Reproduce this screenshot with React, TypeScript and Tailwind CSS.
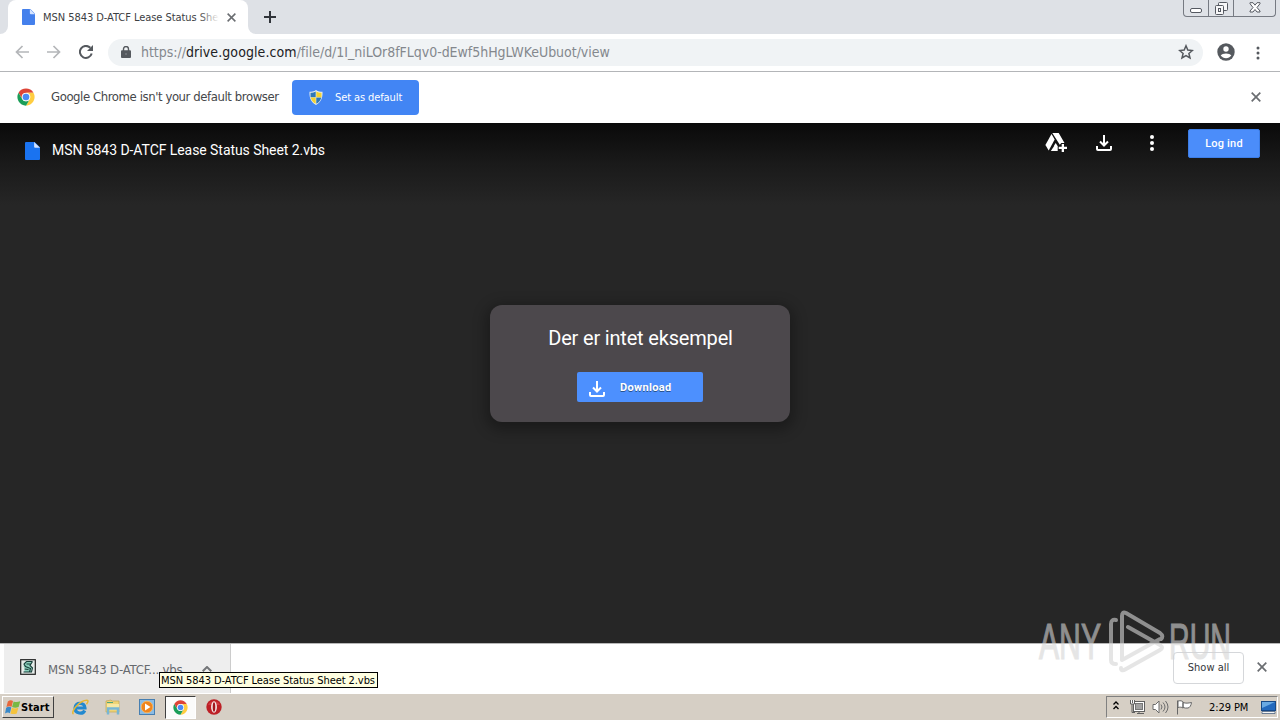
import type { ReactNode } from "react";

const ui = "font-['DejaVu_Sans_Condensed','DejaVu_Sans',sans-serif] [font-stretch:condensed] whitespace-pre leading-none";

function FileIcon({ className, fill }: { className: string; fill: string }) {
  return (
    <svg className={className} viewBox="0 0 14 17" preserveAspectRatio="none">
      <path fill={fill} d="M1 0h8l5 5v11a1 1 0 0 1-1 1H1a1 1 0 0 1-1-1V1a1 1 0 0 1 1-1z" />
      <path fill="#d5e4ff" d="M8.500 0L14 5.500H9.500a1 1 0 0 1-1-1z" />
    </svg>
  );
}

function ChromeLogo({ className }: { className: string }) {
  return (
    <svg className={className} viewBox="0 0 48 48">
      <circle cx="24" cy="24" r="23" fill="#fff" />
      <path fill="#de4437" d="M4.100 12.500A23 23 0 0 1 43.900 12.500H24A11.500 11.500 0 0 0 14 29.700z" />
      <path fill="#ffcd40" d="M43.900 12.500A23 23 0 0 1 24 47l10-17.300A11.500 11.500 0 0 0 24 12.500z" />
      <path fill="#1b9e58" d="M4.100 12.500A23 23 0 0 0 24 47l10-17.300a11.500 11.500 0 0 1-20 0z" />
      <circle cx="24" cy="24" r="11" fill="#f5f7fa" />
      <circle cx="24" cy="24" r="8.800" fill="#4a8af4" />
    </svg>
  );
}

function Cross({ className }: { className: string }) {
  return (
    <svg className={className} viewBox="0 0 10 10" fill="none" stroke="#6a6d71" strokeWidth="1.700">
      <path d="M.7.7l8.600 8.600M9.300.7L.7 9.300" />
    </svg>
  );
}

function DownloadGlyph({ className }: { className: string }) {
  return (
    <svg className={className} viewBox="0 0 16 16" fill="none" stroke="#fff" strokeWidth="2">
      <path d="M8 0v10M4 6.500l4 4 4-4M1 11v3a1 1 0 0 0 1 1h12a1 1 0 0 0 1-1v-3" />
    </svg>
  );
}

function TabStrip() {
  return (
    <div className="flex h-[34px] bg-[#dee1e6]">
      <div className="w-2 bg-white">
        <div className="h-full w-2 rounded-br-lg bg-[#dee1e6]" />
      </div>
      <div className="flex w-60 items-center rounded-t-lg bg-white pl-[14px]">
        <FileIcon className="h-4 w-[13px] shrink-0" fill="#4480ec" />
        <div className="relative ml-2 w-[176px] overflow-hidden">
          <span className={`${ui} block text-[11px] tracking-[-0.05px] text-[#3c4043]`}>MSN 5843 D-ATCF Lease Status Sheet 2.vbs</span>
          <div className="absolute inset-y-0 right-0 w-5 bg-linear-to-r from-transparent to-white" />
        </div>
        <Cross className="ml-[8px] size-[9px]" />
      </div>
      <div className="w-2 bg-white">
        <div className="h-full w-2 rounded-bl-lg bg-[#dee1e6]" />
      </div>
      <svg className="mt-[11px] ml-2 size-3" viewBox="0 0 12 12" stroke="#30343a" strokeWidth="2">
        <path d="M6 0v12M0 6h12" />
      </svg>
      <div className="mr-[4px] ml-auto flex h-[17px] w-[93px] rounded-b-[4px] border border-t-0 border-[#767a82] bg-[#dfe2e7]">
        <div className="flex w-[25px] justify-center border-r border-[#767a82] pt-[8px]">
          <div className="h-[5px] w-3 rounded-[2px] border border-[#555961] bg-white" />
        </div>
        <div className="flex w-[25px] justify-center border-r border-[#767a82] pt-[1px]">
          <svg className="size-[14px]" viewBox="0 0 14 14" fill="#f7f7f8" stroke="#555961">
            <rect x="4.500" y="1.500" width="9" height="8" rx="1" />
            <rect x="1.500" y="4.500" width="8" height="9" rx="1" />
            <rect x="4.500" y="7.500" width="2" height="3" />
          </svg>
        </div>
        <div className="flex flex-1 justify-center pt-[2px]">
          <svg className="h-[11px] w-3" viewBox="0 0 12 11" fill="#fff" stroke="#555961">
            <path d="M1 .7h3l2 2.500L8 .7h3v1L8 5.500l3 3.500v1H8L6 7.500 4 10H1V9l3-3.500-3-3.800z" />
          </svg>
        </div>
      </div>
    </div>
  );
}

function Toolbar() {
  return (
    <div className="flex h-[38px] items-center border-b border-[#b3b5b8] bg-white pb-px pl-[15px]">
      <svg className="h-3.5 w-[14px]" viewBox="0 0 14 14" fill="none" stroke="#b4b6b9" strokeWidth="1.700">
        <path d="M14 7H1.500M7.500 1l-6 6 6 6" />
      </svg>
      <svg className="ml-[18px] h-3.5 w-[14px]" viewBox="0 0 14 14" fill="none" stroke="#b4b6b9" strokeWidth="1.700">
        <path d="M0 7h12.500M6.500 1l6 6-6 6" />
      </svg>
      <svg className="ml-[18px] size-[14px]" viewBox="0 0 14 14">
        <path fill="none" stroke="#55595e" strokeWidth="2" d="M12.700 8.500A6 6 0 1 1 11.300 2.800" />
        <path fill="#55595e" d="M14 0v6H8z" />
      </svg>
      <div className="ml-[15px] flex h-[27px] w-[1095px] items-center rounded-full bg-[#f0f3f5] pl-[13px]">
        <svg className="h-3 w-[10px]" viewBox="0 0 10 12">
          <rect y="4.200" width="10" height="7.800" rx="1" fill="#55595e" />
          <path fill="none" stroke="#55595e" strokeWidth="1.400" d="M2.500 5V3a2.500 2.500 0 0 1 5 0v2" />
          <circle cx="5" cy="8" r="1" fill="#777b80" />
        </svg>
        <span className={`${ui} mb-px ml-[10px] text-[14px] tracking-[-0.03px] text-[#84888d]`}>
          https://<span className="tracking-[0.08px] text-[#202124]">drive.google.com</span>/file/d/1I_niLOr8fFLqv0-dEwf5hHgLWKeUbuot/view
        </span>
        <svg className="mr-[9px] ml-auto size-[16px]" viewBox="0 0 16 16" fill="none" stroke="#55595e" strokeWidth="1.500">
          <path d="M8 1.800l1.800 4.300 4.600.4-3.500 3 1.100 4.500L8 11.600 4 14l1.100-4.500-3.500-3 4.600-.4z" />
        </svg>
      </div>
      <svg className="ml-[14px] size-[18px]" viewBox="0 0 18 18">
        <circle cx="9" cy="9" r="8.700" fill="#55595e" />
        <circle cx="9" cy="6" r="2.700" fill="#fff" />
        <path fill="#fff" d="M3.700 12.600C5 9.700 13 9.700 14.300 12.600 12 16 6 16 3.700 12.600z" />
      </svg>
      <svg className="mt-px ml-[21px] h-[14px] w-[4px]" viewBox="0 0 4 14" fill="#55595e">
        <circle cx="2" cy="2" r="1.500" />
        <circle cx="2" cy="7" r="1.500" />
        <circle cx="2" cy="12" r="1.500" />
      </svg>
    </div>
  );
}

function InfoBar() {
  return (
    <div className="flex h-[51px] items-center bg-white pl-[17px]">
      <ChromeLogo className="mb-px size-[18px]" />
      <span className={`${ui} mb-[2px] ml-4 w-[241px] text-[13px] tracking-[-0.42px] text-[#45474a]`}>Google Chrome isn't your default browser</span>
      <div className="flex h-[35px] w-[127px] items-center rounded-[4px] bg-[#4285f4] pl-[17px]">
        <svg className="h-[15px] w-[14px]" viewBox="0 0 14 15">
          <path fill="#e6edf0" d="M7 0c2 1.500 4.500 1.800 6.500 1.800C14 9 11 13 7 15 3 13 0 9 .5 1.800 2.500 1.800 5 1.500 7 0z" />
          <path fill="#2f78b7" d="M6.700 1.500v5.700H1.500V2.800c2 0 4-.4 5.200-1.300zM7.300 7.500h5c-.6 3-2.500 5-5 6.200z" />
          <path fill="#f4d332" d="M7.300 1.500v5.700h5.200V2.800c-2 0-4-.4-5.200-1.300zM6.700 7.500h-5c.6 3 2.500 5 5 6.200z" />
        </svg>
        <span className={`${ui} ml-3 text-[11px] tracking-[-0.1px] text-white`}>Set as default</span>
      </div>
      <Cross className="mr-[19px] mb-px ml-auto size-[10px]" />
    </div>
  );
}

function Viewer() {
  return (
    <div className="flex h-[520px] flex-col bg-[#262626]">
      <div className="flex h-[82px] items-start bg-linear-to-b from-[#0a0a0a] via-[#1a1a1a] to-[#262626]">
        <FileIcon className="mt-[19px] ml-[25px] h-[18px] w-[15px]" fill="#1a73f0" />
        <span className="mt-[19px] ml-3 font-[Roboto,sans-serif] text-[14px] leading-4 tracking-[-0.06px] whitespace-pre text-white">MSN 5843 D-ATCF Lease Status Sheet 2.vbs</span>
        <svg className="mt-[9px] mr-[29px] ml-auto h-[21px] w-[22px]" viewBox="0 0 22 21" fill="#fff">
          <path d="M7.300 1h6.400l5.800 10h-3.200l-1.500 1.700z" />
          <path d="M6.500 2l3.200 5.500-6 11L.4 13z" />
          <path d="M9.200 14h3.500v5H5.800z" />
          <path d="M10.700 11l2 3.300h-4z" />
          <path d="M16.700 12h2.300v2.800h3V17h-3v3h-2.300v-3h-3v-2.200h3z" />
        </svg>
        <DownloadGlyph className="mt-[12px] size-[16px]" />
        <svg className="mt-[12px] ml-[38px] h-4 w-[4px]" viewBox="0 0 4 16" fill="#fff">
          <circle cx="2" cy="2" r="2" />
          <circle cx="2" cy="8" r="2" />
          <circle cx="2" cy="14" r="2" />
        </svg>
        <div className="mt-[6px] mr-5 ml-[34px] flex h-[29px] w-[72px] items-center justify-center rounded-[2px] border border-[#3c7de6] bg-[#4b8dfa] pt-px font-[Roboto,sans-serif] text-[11px] font-medium tracking-[0.2px] text-white">Log ind</div>
      </div>
      <div className="mx-auto mt-[100px] flex h-[117px] w-[300px] flex-col items-center rounded-[12px] bg-[#4c484c] pt-[21px] shadow-[0_4px_14px_4px_rgba(0,0,0,0.3)]">
        <span className="pl-px font-[Roboto,sans-serif] text-[20px] leading-6 tracking-[-0.18px] whitespace-pre text-white">Der er intet eksempel</span>
        <div className="mt-[22px] flex h-[30px] w-[126px] items-center rounded-[2px] bg-[#4d90fe] pl-3">
          <DownloadGlyph className="mt-[3px] size-[16px]" />
          <span className="mt-[2px] ml-[15px] font-[Roboto,sans-serif] text-[11px] font-bold tracking-[0.35px] text-white [text-shadow:0_1px_#26528f]">Download</span>
        </div>
      </div>
    </div>
  );
}

function DownloadShelf() {
  return (
    <div className="flex h-[50px] items-center border-t border-[#b7b7b7] bg-white pl-1">
      <div className="flex h-[49px] w-[227px] items-center border-r border-[#ccc] bg-[#eee] pl-[16px]">
        <svg className="mb-[3px] h-4 w-[16px]" viewBox="0 0 16 16">
          <rect x=".7" y=".7" width="14.600" height="14.600" fill="#e5ece9" stroke="#222" strokeWidth="1.200" />
          <path fill="#8ad0bc" d="M5 3h7.500L10 6.500l2 2.500-1 4H4l1-3-1.500-3z" />
          <path fill="none" stroke="#173c38" strokeWidth="1.100" d="M12.500 2.500H6.500L4 5l1.500 2.500L10.500 9.500l-1 3.500H3.500M6.500 5h5M12.500 2.500L10 6.500l2.500 2.500-1 4h-2M4.500 10l4 .5" />
        </svg>
        <span className={`${ui} mt-[2px] ml-3 w-[154px] text-[13px] tracking-[-0.15px] text-[#66696d]`}>MSN 5843 D-ATCF....vbs</span>
        <svg className="h-[6px] w-[10px]" viewBox="0 0 10 6" fill="none" stroke="#747679" strokeWidth="2">
          <path d="M.7 5.300L5 1l4.300 4.300" />
        </svg>
      </div>
      <div className={`${ui} mb-[2px] ml-auto flex h-8 w-[71px] items-center justify-center rounded-[4px] border border-[#d5d7da] text-[11px] text-[#35373a]`}>Show all</div>
      <Cross className="mr-[13px] mb-[3px] ml-[13px] size-[10px]" />
    </div>
  );
}

function QuickSlot({ children, active = false }: { children: ReactNode; active?: boolean }) {
  return (
    <div className={`flex h-[23px] items-center justify-center ${active ? "w-[31px] border border-t-[#404040] border-r-white border-b-white border-l-[#404040] bg-[#fbfbfa]" : "w-[31px]"}`}>{children}</div>
  );
}

function Taskbar() {
  return (
    <div className="flex h-[27px] items-center border-t border-white bg-[#d6cfc5] pl-[2px]">
      <div className="flex h-[22px] w-[52px] items-center border border-t-white border-r-[#404040] border-b-[#404040] border-l-white bg-[#d6cfc5] pl-[2px]">
        <svg className="h-[15px] w-4" viewBox="0 0 17 16">
          <path fill="#e7673b" d="M3 1.500c2-1.700 4-1.500 5.500-.5L7 7.200C5.500 6.300 3.500 6.300 1.500 7.500z" />
          <path fill="#78b844" d="M9.200 1.500c2 1 4.500.8 7-.2L14.500 7.500c-2.500 1-4.500 1-7 0z" />
          <path fill="#3989c9" d="M1.200 8.300c2-1.300 4-1.200 5.500-.3l-1.500 6C4 13.200 2 13.100 0 14.300z" />
          <path fill="#f5c33c" d="M7.400 8.300c2 1 4.500 1 6.800 0l-1.700 6c-2.200 1-4.600 1-6.800 0z" />
        </svg>
        <span className={`${ui} text-[11px] font-bold tracking-[0.1px] text-black`}>Start</span>
      </div>
      <div className="ml-[10px] flex">
        <QuickSlot>
          <svg className="h-[17px] w-[18px]" viewBox="0 0 18 17" fill="none">
            <path stroke="#2389cf" strokeWidth="3.200" d="M4 9h10c0-6-10-6.500-10 0 0 6 8 6.500 9.700 2.500" />
            <path stroke="#e7b832" strokeWidth="1.500" d="M2.500 15C-1 13 9 1 16 1.200c2.500.3-.5 4-.5 4" />
          </svg>
        </QuickSlot>
        <div className="ml-[2px]" />
        <QuickSlot>
          <svg className="h-[16px] w-4" viewBox="0 0 16 16">
            <path fill="#efd477" stroke="#c4a653" strokeWidth=".7" d="M1 2l5-1 1 1h7v11H1z" />
            <path fill="#f7e8a2" d="M2 5h12v6H2z" />
            <path fill="none" stroke="#78b6d4" strokeWidth="2.500" d="M3 15.500V9.500h10v6" />
            <path stroke="#4fa57b" strokeWidth="1" d="M2 3.500h6" />
          </svg>
        </QuickSlot>
        <div className="ml-[3px]" />
        <QuickSlot>
          <svg className="size-[16px]" viewBox="0 0 16 16">
            <rect x=".5" y=".5" width="15" height="15" fill="#8cbce4" stroke="#477fb1" />
            <circle cx="8" cy="8" r="5.800" fill="#ef851e" stroke="#f7b35c" />
            <path fill="#fff" d="M6 4.500l5.500 3.500L6 11.500z" />
          </svg>
        </QuickSlot>
        <div className="ml-[3px]" />
        <QuickSlot active>
          <ChromeLogo className="size-[15px]" />
        </QuickSlot>
        <div className="ml-[2px]" />
        <QuickSlot>
          <svg className="size-[16px]" viewBox="0 0 16 16">
            <circle cx="8" cy="8" r="7.700" fill="#bd2026" />
            <path fill="#e5525a" d="M2 6a6.500 6 0 0 1 12 0z" opacity=".5" />
            <ellipse cx="8" cy="8" rx="2.900" ry="5.800" fill="#f7eeee" />
            <ellipse cx="8" cy="8" rx="1.300" ry="4.800" fill="#a3161d" />
          </svg>
        </QuickSlot>
      </div>
      <div className="mr-[2px] ml-auto flex h-[22px] w-[172px] items-center border border-t-[#808080] border-r-white border-b-white border-l-[#808080] pl-[6px]">
        <svg className="mb-[3px] h-[9px] w-[6px]" viewBox="0 0 6 9" fill="none" stroke="#000" strokeWidth="1.300">
          <path d="M.5 3.500L3 1l2.500 2.500M.5 8L3 5.500 5.500 8" />
        </svg>
        <svg className="ml-[10px] size-4" viewBox="0 0 16 16">
          <rect x="4.500" y="2.500" width="11" height="10" fill="#fff" stroke="#606060" />
          <rect x="6.500" y="4.500" width="7" height="6" fill="#a2a2a2" stroke="#777" />
          <path fill="none" stroke="#606060" d="M8 14.500h7M10 12.500v2M3 5v8.500h3" />
          <path fill="#fff" stroke="#606060" d="M1.500 1v4h4V1M3.500 1v3" />
        </svg>
        <svg className="ml-[7px] h-4 w-[17px]" viewBox="0 0 17 16" fill="none" stroke="#6b6b6b">
          <path fill="#fff" d="M1 5.500h2.500L7 2v12l-3.500-3.500H1z" />
          <path d="M9 5.500q2 2.500 0 5M11 3.500q4 4.500 0 9M13.500 2q5 6 0 12" />
        </svg>
        <svg className="ml-[7px] h-4 w-[17px]" viewBox="0 0 17 16" fill="#fff" stroke="#676767">
          <path d="M1.500 1.500v14M2 2c3-.8 4 .2 5 .8V9C5.500 8 4 8 2 8.500zM7 3.500c3 1 5 .7 8.500 0-.5 3-1.500 5-3.500 5.500-2 .3-3 0-5-.5z" />
        </svg>
        <span className={`${ui} ml-[16px] text-[11px] tracking-[-0.08px] text-black`}>2:29 PM</span>
        <svg className="mr-[1px] ml-auto h-[15px] w-[15px]" viewBox="0 0 15 15">
          <rect x=".5" y="1.500" width="14" height="9" fill="#2369bd" stroke="#174987" />
          <path fill="#69a9e3" d="M1 2h13L1 8z" />
          <path fill="#f5f5f5" stroke="#385375" strokeWidth=".7" d="M1 11.500h13v2H1z" />
        </svg>
      </div>
    </div>
  );
}

function Watermark() {
  return (
    <svg className="pointer-events-none absolute top-[606px] left-[1034px] h-[72px] w-[202px] opacity-60" viewBox="0 0 202 72">
      <g fontFamily="Liberation Sans Narrow, Liberation Sans, sans-serif" fontSize="50" fill="#d5d5d5" stroke="#d5d5d5" strokeWidth="1.200">
        <text x="5" y="53" textLength="62" lengthAdjust="spacingAndGlyphs">ANY</text>
        <text x="135" y="53" textLength="62" lengthAdjust="spacingAndGlyphs">RUN</text>
      </g>
      <g fill="none" stroke="#d5d5d5" strokeWidth="4" strokeLinecap="round" strokeLinejoin="round">
        <path d="M82 14q-5-1-5 4v36q0 4 5 4" />
        <path d="M87 50V9q0-4 4-2l35 20q4 3 1 6l-33-13" opacity="0" />
        <path d="M87 53V9q0-4 4-2l35 20q4 3 0 6L93 15" opacity="0" />
        <path d="M88 54V9q0-4 4-2l35 20q4 4-1 6L94 17" opacity="0" />
        <path d="M88 54V10q0-5 4-3l34 20q4 3 1 6M94 21l32 18q4 3 0 5L92 63q-5 3-5-1M88 54l38-21" />
      </g>
    </svg>
  );
}

export default function App() {
  return (
    <div className="relative h-[720px] w-[1280px] overflow-hidden bg-white">
      <TabStrip />
      <Toolbar />
      <InfoBar />
      <Viewer />
      <DownloadShelf />
      <Taskbar />
      <Watermark />
      <div className={`${ui} absolute top-[672px] left-[159px] flex h-4 w-[219px] items-center border border-black bg-[#ffffe1] pl-px text-[11px] tracking-[-0.07px] text-black`}>MSN 5843 D-ATCF Lease Status Sheet 2.vbs</div>
    </div>
  );
}
